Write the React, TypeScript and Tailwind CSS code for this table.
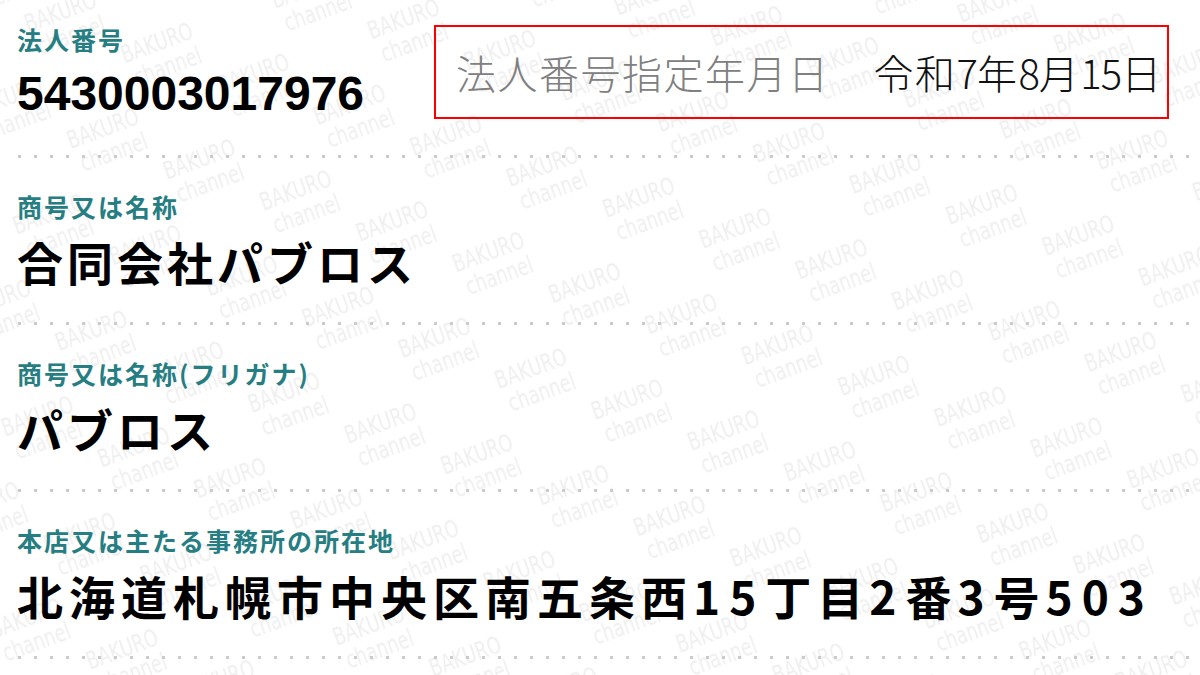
const jp = { fontFamily: '"Noto Sans CJK JP", "Noto Sans", sans-serif' };
const num = { fontFamily: '"Liberation Sans", Arial, sans-serif' };

function Watermark() {
  return (
    <svg className="absolute inset-0 h-full w-full pointer-events-none" aria-hidden="true">
      <defs>
        <pattern
          id="wm"
          width="160"
          height="124"
          patternUnits="userSpaceOnUse"
          patternTransform="translate(20 10) rotate(-20)"
        >
          <g fill="#efefef" fontFamily='"DejaVu Sans", sans-serif' fontSize="24" transform="scale(0.74 1)">
            <text x="0" y="24">BAKURO</text>
            <text x="6" y="50">channel</text>
            <text x="108" y="86">BAKURO</text>
            <text x="114" y="112">channel</text>
          </g>
        </pattern>
      </defs>
      <rect width="100%" height="100%" fill="url(#wm)" />
    </svg>
  );
}

function Dots() {
  return (
    <div className="ml-[18px] h-[3px] bg-[linear-gradient(to_right,#cbcbcb_3px,transparent_3px)] bg-size-[16px_3px] bg-repeat-x" />
  );
}

function Label({ children }: { children: React.ReactNode }) {
  return (
    <div className="h-[30px] text-[25px] leading-[30px] font-bold tracking-[2px] text-[#267e82]" style={jp}>
      {children}
    </div>
  );
}

function D({ children }: { children: React.ReactNode }) {
  return <span className="tracking-[9px]">{children}</span>;
}

export default function App() {
  return (
    <div className="relative h-[675px] w-[1200px] overflow-hidden bg-white">
      <Watermark />
      <div className="relative pt-[24px]">
        <div className="flex items-start">
          <div className="w-[434px] pl-[17px]">
            <Label>法人番号</Label>
            <div className="mt-[15px] h-[50px] text-[48px] leading-[50px] font-bold text-black" style={num}>
              5430003017976
            </div>
          </div>
          <div className="mt-[1px] flex h-[94px] w-[735px] items-center border-2 border-[#ff0000] pl-[20px]" style={jp}>
            <span className="text-[40px] leading-none font-light tracking-[1.5px] text-[#808080]">法人番号指定年月日</span>
            <span className="ml-[44px] text-[40px] leading-none font-light tracking-[1.5px] text-[#111]">
              令和<span className="tracking-[-1px]">7</span>年<span className="tracking-[-1px]">8</span>月
              <span className="tracking-[-1px]">15</span>日
            </span>
          </div>
        </div>
        <div className="mt-[36px]">
          <Dots />
        </div>

        <div className="pl-[17px] pt-[33px]">
          <Label>商号又は名称</Label>
          <div className="mt-[15px] h-[50px] text-[46px] leading-[50px] font-bold tracking-[4px] text-black" style={jp}>
            合同会社パブロス
          </div>
        </div>
        <div className="mt-[36px]">
          <Dots />
        </div>

        <div className="pl-[17px] pt-[33px]">
          <Label>商号又は名称(フリガナ)</Label>
          <div className="mt-[15px] h-[50px] text-[46px] leading-[50px] font-bold tracking-[4px] text-black" style={jp}>
            パブロス
          </div>
        </div>
        <div className="mt-[36px]">
          <Dots />
        </div>

        <div className="pl-[17px] pt-[33px]">
          <Label>本店又は主たる事務所の所在地</Label>
          <div className="mt-[15px] h-[50px] text-[46px] leading-[50px] font-bold tracking-[6px] text-black" style={jp}>
            北海道札幌市中央区南五条西<D>15</D>丁目<D>2</D>番<D>3</D>号<D>503</D>
          </div>
        </div>
        <div className="mt-[36px]">
          <Dots />
        </div>
      </div>
    </div>
  );
}
